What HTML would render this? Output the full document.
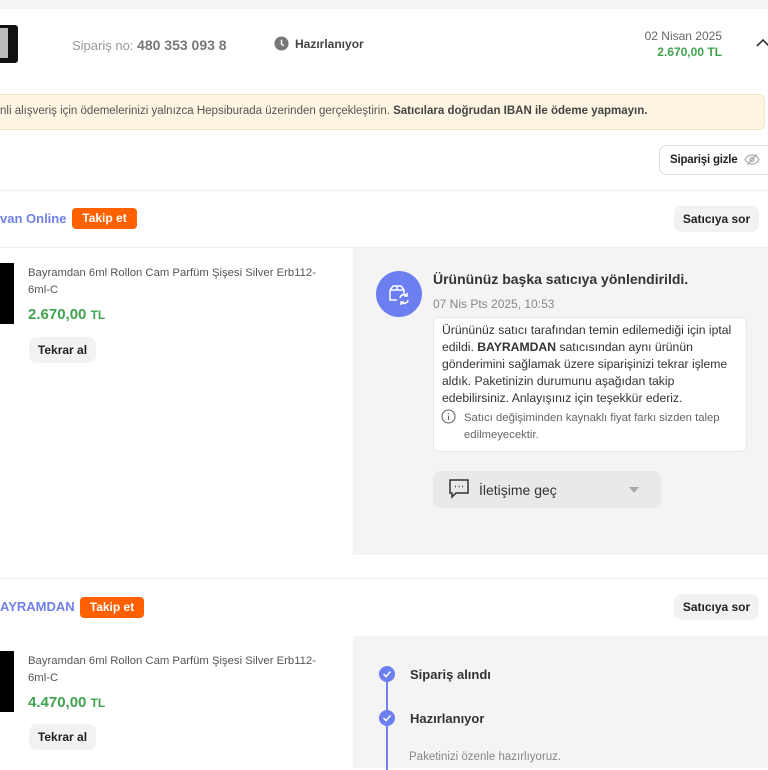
<!DOCTYPE html>
<html><head><meta charset="utf-8"><style>
*{margin:0;padding:0;box-sizing:border-box}
body{width:768px;height:768px;overflow:hidden;background:#fff;font-family:"Liberation Sans",Arial,sans-serif;color:#333;position:relative}
.a{position:absolute}
.btn{position:absolute;background:#f2f2f2;border-radius:8px;font-size:12px;font-weight:bold;color:#222;text-align:center}
.takip{position:absolute;background:#ff6000;color:#fff;font-size:12px;font-weight:bold;border-radius:4px;text-align:center;height:21px;line-height:21px}
.green{color:#3fa34d}
</style></head><body>
<div class="a" style="left:0;top:0;width:768px;height:9px;background:#f4f4f4"></div>
<div class="a" style="left:0;top:25px;width:18px;height:38px;background:#111;border-radius:0 3px 3px 0"></div>
<div class="a" style="left:0;top:28px;width:8px;height:30px;background:#bbb"></div>
<div class="a" style="left:72px;top:37px;font-size:13px;color:#999">Sipariş no: <b style="color:#777;font-size:14px">480 353 093 8</b></div>
<svg class="a" style="left:274px;top:36px" width="15" height="15" viewBox="0 0 16 16"><circle cx="8" cy="8" r="7.5" fill="#777"/><path d="M8 4v4.5l2.5 2" stroke="#fff" stroke-width="1.6" fill="none"/></svg>
<div class="a" style="left:295px;top:37px;font-size:12px;font-weight:bold;color:#444">Hazırlanıyor</div>
<div class="a" style="right:46px;top:29px;font-size:12px;color:#666;text-align:right">02 Nisan 2025</div>
<div class="a green" style="right:46px;top:45px;font-size:12px;font-weight:bold;text-align:right">2.670,00 TL</div>
<svg class="a" style="left:756px;top:38px" width="14" height="10"><path d="M1 8l6-6 6 6" stroke="#333" stroke-width="1.6" fill="none"/></svg>
<div class="a" style="left:-5px;top:94px;width:770px;height:36px;background:#fdf5e2;border:1px solid #f3e6c4;border-radius:6px"></div>
<div class="a" style="left:0;top:105px;font-size:11.5px;color:#555;white-space:nowrap">nli alışveriş için ödemelerinizi yalnızca Hepsiburada üzerinden gerçekleştirin. <b style="color:#444">Satıcılara doğrudan IBAN ile ödeme yapmayın.</b></div>
<div class="a" style="left:659px;top:145px;width:115px;height:30px;border:1.5px solid #ddd;border-radius:8px"></div>
<div class="a" style="left:670px;top:154px;font-size:11.5px;font-weight:bold;color:#222;letter-spacing:-0.2px">Siparişi gizle</div>
<svg class="a" style="left:744px;top:153px" width="16" height="13" viewBox="0 0 16 13"><path d="M1 6.5C3 3 5.5 2 8 2s5 1 7 4.5C13 10 10.5 11 8 11S3 10 1 6.5z" stroke="#aaa" fill="none" stroke-width="1.2"/><circle cx="8" cy="6.5" r="2" stroke="#aaa" fill="none" stroke-width="1.2"/><path d="M3 12L13 1" stroke="#aaa" stroke-width="1.2"/></svg>
<div class="a" style="left:0;top:190px;width:768px;height:1px;background:#eee"></div>
<div class="a" style="left:0;top:211px;font-size:13px;font-weight:bold;color:#7080e8">van Online</div>
<div class="takip" style="left:72px;top:208px;width:65px">Takip et</div>
<div class="btn" style="left:674px;top:206px;width:85px;height:26px;line-height:26px">Satıcıya sor</div>
<div class="a" style="left:0;top:247px;width:768px;height:1px;background:#f0f0f0"></div>
<div class="a" style="left:353px;top:248px;width:415px;height:307px;background:#f4f4f5"></div>
<div class="a" style="left:0;top:263px;width:14px;height:61px;background:#000"></div>
<div class="a" style="left:28px;top:265px;width:300px;font-size:11.3px;line-height:17px;color:#555">Bayramdan 6ml Rollon Cam Parfüm Şişesi Silver Erb112-6ml-C</div>
<div class="a green" style="left:28px;top:306px;font-size:15px;font-weight:bold">2.670,00 <span style="font-size:12px">TL</span></div>
<div class="btn" style="left:29px;top:337px;width:67px;height:26px;line-height:26px">Tekrar al</div>
<div class="a" style="left:376px;top:271px;width:46px;height:46px;border-radius:50%;background:#6b7ff0"></div>
<svg class="a" style="left:386px;top:281px" width="26" height="26" viewBox="0 0 26 26" fill="none" stroke="#fff" stroke-width="1.5"><path d="M4 9h14v4M4 9v10h7M4 9l3-4h8l3 4M11 5v4"/><path d="M14 17a4 4 0 0 1 7-2M22 19a4 4 0 0 1-7 2M21 12v3h-3M15 24v-3h3"/></svg>
<div class="a" style="left:433px;top:271px;font-size:14px;font-weight:bold;color:#333">Ürününüz başka satıcıya yönlendirildi.</div>
<div class="a" style="left:433px;top:297px;font-size:12px;color:#888">07 Nis Pts 2025, 10:53</div>
<div class="a" style="left:433px;top:317px;width:314px;height:135px;background:#fff;border-radius:6px;border:1px solid #e8e8e8"></div>
<div class="a" style="left:442px;top:322px;width:300px;font-size:12.2px;line-height:17px;color:#333">Ürününüz satıcı tarafından temin edilemediği için iptal edildi. <b>BAYRAMDAN</b> satıcısından aynı ürünün gönderimini sağlamak üzere siparişinizi tekrar işleme aldık. Paketinizin durumunu aşağıdan takip edebilirsiniz. Anlayışınız için teşekkür ederiz.</div>
<svg class="a" style="left:441px;top:409px" width="15" height="15"><circle cx="7.5" cy="7.5" r="6.5" stroke="#666" fill="none" stroke-width="1.1"/><path d="M7.5 6.5v4.5M7.5 4v1" stroke="#666" stroke-width="1.2"/></svg>
<div class="a" style="left:464px;top:410px;width:275px;font-size:11.3px;line-height:17px;color:#666">Satıcı değişiminden kaynaklı fiyat farkı sizden talep edilmeyecektir.</div>
<div class="a" style="left:433px;top:471px;width:228px;height:37px;background:#e9e9ea;border-radius:8px"></div>
<svg class="a" style="left:448px;top:478px" width="22" height="22" viewBox="0 0 22 22" fill="none" stroke="#333" stroke-width="1.5"><path d="M2 2h18v13H8l-4 4v-4H2z"/><path d="M7 8.5h1M10.5 8.5h1M14 8.5h1"/></svg>
<div class="a" style="left:479px;top:482px;font-size:14px;color:#333">İletişime geç</div>
<svg class="a" style="left:629px;top:487px" width="10" height="6"><path d="M0 0h10L5 6z" fill="#aaa"/></svg>
<div class="a" style="left:0;top:578px;width:768px;height:1px;background:#eee"></div>
<div class="a" style="left:0;top:599px;font-size:13px;font-weight:bold;color:#7080e8">AYRAMDAN</div>
<div class="takip" style="left:80px;top:597px;width:64px">Takip et</div>
<div class="btn" style="left:674px;top:594px;width:85px;height:26px;line-height:26px">Satıcıya sor</div>
<div class="a" style="left:353px;top:636px;width:415px;height:132px;background:#f4f4f5"></div>
<div class="a" style="left:0;top:651px;width:14px;height:61px;background:#000"></div>
<div class="a" style="left:28px;top:653px;width:300px;font-size:11.3px;line-height:17px;color:#555">Bayramdan 6ml Rollon Cam Parfüm Şişesi Silver Erb112-6ml-C</div>
<div class="a green" style="left:28px;top:694px;font-size:15px;font-weight:bold">4.470,00 <span style="font-size:12px">TL</span></div>
<div class="btn" style="left:29px;top:724px;width:67px;height:26px;line-height:26px">Tekrar al</div>
<div class="a" style="left:386px;top:680px;width:2px;height:90px;background:#6b7ff0"></div>
<svg class="a" style="left:379px;top:666px" width="16" height="16"><circle cx="8" cy="8" r="8" fill="#6b7ff0"/><path d="M4.5 8l2.5 2.5 4.5-5" stroke="#fff" stroke-width="1.5" fill="none"/></svg>
<svg class="a" style="left:379px;top:710px" width="16" height="16"><circle cx="8" cy="8" r="8" fill="#6b7ff0"/><path d="M4.5 8l2.5 2.5 4.5-5" stroke="#fff" stroke-width="1.5" fill="none"/></svg>
<div class="a" style="left:410px;top:667px;font-size:13px;font-weight:bold;color:#333">Sipariş alındı</div>
<div class="a" style="left:410px;top:711px;font-size:13px;font-weight:bold;color:#333">Hazırlanıyor</div>
<div class="a" style="left:409px;top:751px;font-size:11.5px;color:#888">Paketinizi özenle hazırlıyoruz.</div>
</body></html>
